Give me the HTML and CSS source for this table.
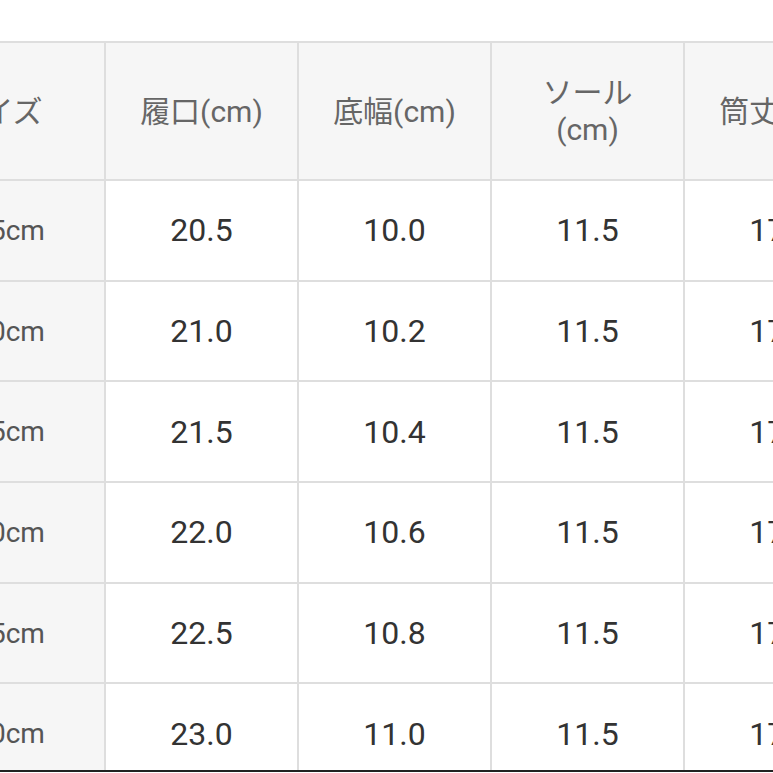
FILE: index.html
```html
<!DOCTYPE html>
<html lang="ja">
<head>
<meta charset="utf-8">
<link rel="stylesheet" href="styles.css">
</head>
<body>
<div class="frame">
  <div class="sheet">
    <div class="grid">
      <div class="cell head">サイズ</div>
      <div class="cell head">履口(cm)</div>
      <div class="cell head">底幅(cm)</div>
      <div class="cell head">ソール<br>(cm)</div>
      <div class="cell head">筒丈(cm)</div>

      <div class="cell size">22.5cm</div>
      <div class="cell num">20.5</div>
      <div class="cell num">10.0</div>
      <div class="cell num">11.5</div>
      <div class="cell num">17.0</div>

      <div class="cell size">23.0cm</div>
      <div class="cell num">21.0</div>
      <div class="cell num">10.2</div>
      <div class="cell num">11.5</div>
      <div class="cell num">17.0</div>

      <div class="cell size">23.5cm</div>
      <div class="cell num">21.5</div>
      <div class="cell num">10.4</div>
      <div class="cell num">11.5</div>
      <div class="cell num">17.0</div>

      <div class="cell size">24.0cm</div>
      <div class="cell num">22.0</div>
      <div class="cell num">10.6</div>
      <div class="cell num">11.5</div>
      <div class="cell num">17.0</div>

      <div class="cell size">24.5cm</div>
      <div class="cell num">22.5</div>
      <div class="cell num">10.8</div>
      <div class="cell num">11.5</div>
      <div class="cell num">17.0</div>

      <div class="cell size">25.0cm</div>
      <div class="cell num">23.0</div>
      <div class="cell num">11.0</div>
      <div class="cell num">11.5</div>
      <div class="cell num">17.0</div>
    </div>
  </div>
</div>
</body>
</html>
```

FILE: styles.css
```css
html, body {
  margin: 0;
  padding: 0;
  background: #ffffff;
  overflow: hidden;
}

.frame {
  width: 773px;
  height: 770px;
  overflow: hidden;
  border-bottom: 2px solid #222222;
  background: #ffffff;
}

.sheet {
  padding-top: 41px;
  margin-left: -110px;
}

.grid {
  display: inline-grid;
  grid-template-columns: 212px 191px 191px 191px 191px;
  grid-template-rows: 136px repeat(6, 98.7px);
  gap: 2px;
  padding: 2px;
  background: #dedede;
  font-family: Roboto, "Noto Sans CJK JP", sans-serif;
}

.cell {
  display: flex;
  align-items: center;
  justify-content: center;
  text-align: center;
  background: #ffffff;
}

.head {
  background: #f6f6f6;
  color: #666666;
  font-size: 30px;
  line-height: 37px;
}

.size {
  background: #f6f6f6;
  color: #555555;
  font-size: 28px;
}

.num {
  color: #333333;
  font-size: 32px;
}
```
